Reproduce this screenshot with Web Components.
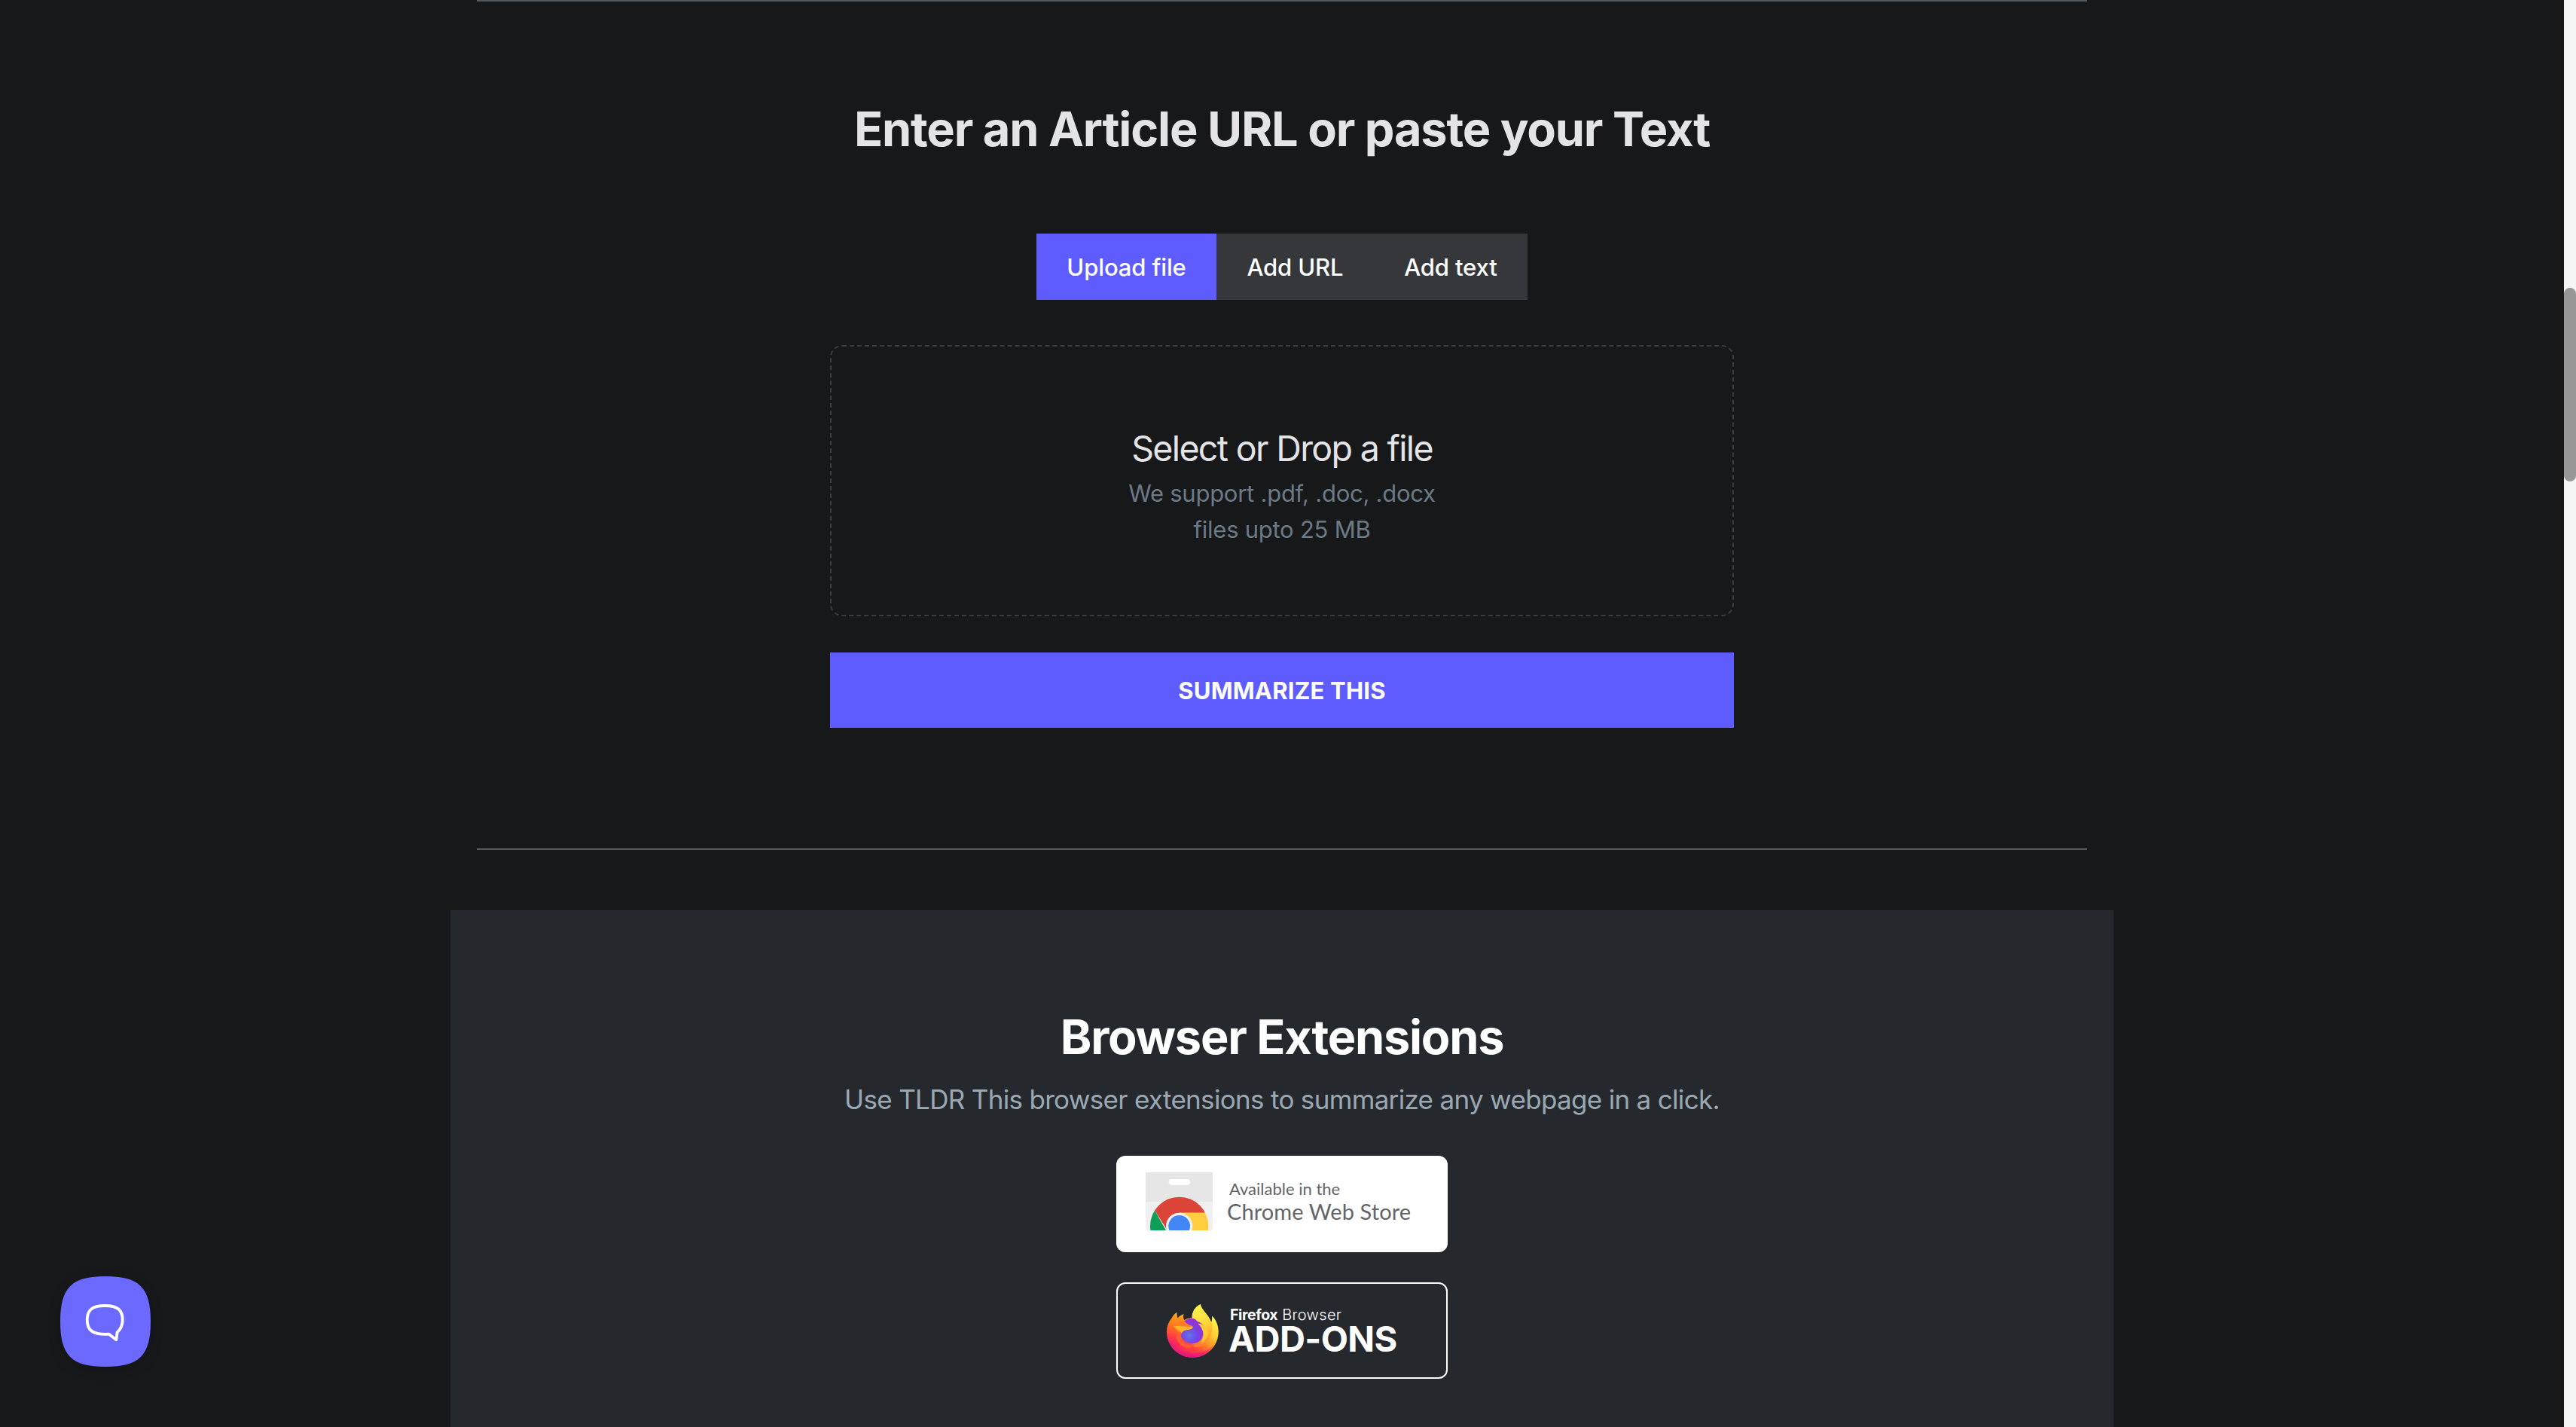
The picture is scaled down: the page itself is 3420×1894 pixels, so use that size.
<!DOCTYPE html>
<html lang="en">
<head>
<meta charset="utf-8">
<title>TLDR This</title>
<style>
	body {
		margin: 0;
		background: #17181a;
		font-family: Inter, "Liberation Sans", sans-serif;
		overflow: hidden;
	}
</style>
</head>
<body>
<tldr-page>
	<section-rule></section-rule>
	<summarize-form heading="Enter an Article URL or paste your Text">
		<tab-bar slot="tabs">
			<tab-item active>Upload file</tab-item>
			<tab-item>Add URL</tab-item>
			<tab-item>Add text</tab-item>
		</tab-bar>
		<drop-zone>
			Select or Drop a file
			<span slot="hint">We support .pdf, .doc, .docx<br>files upto 25 MB</span>
		</drop-zone>
		<submit-button>SUMMARIZE THIS</submit-button>
	</summarize-form>
	<section-rule></section-rule>
	<extensions-panel>
		<span slot="title">Browser Extensions</span>
		<span slot="subtitle">Use TLDR This browser extensions to summarize any webpage in a click.</span>
		<chrome-badge></chrome-badge>
		<firefox-badge></firefox-badge>
	</extensions-panel>
</tldr-page>
<chat-launcher></chat-launcher>

<script>
function define(name, html) {
	window.customElements.define(name, class extends HTMLElement {
		constructor() {
			super();
			this.attachShadow({ mode: 'open' });
			this.shadowRoot.innerHTML = html;
		}
	});
}

define('tldr-page', `
	<style>
		:host {
			display: flex;
			height: 1894px;
			overflow: hidden;
		}
		main {
			flex: 1;
			display: flex;
			flex-direction: column;
			align-items: center;
		}
		.track {
			box-sizing: border-box;
			width: 16px;
			padding-top: 382px;
			background: #f5f5f5;
		}
		.thumb {
			height: 257px;
			border-radius: 8px;
			background: #979797;
		}
	</style>
	<main><slot></slot></main>
	<div class="track"><div class="thumb"></div></div>
`);

define('section-rule', `
	<style>
		:host {
			display: block;
			flex: none;
			width: 2138px;
			height: 2px;
			background: #545b61;
		}
	</style>
`);

class SummarizeForm extends HTMLElement {
	constructor() {
		super();
		this.attachShadow({ mode: 'open' });
		this.shadowRoot.innerHTML = `
			<style>
				:host {
					display: flex;
					flex-direction: column;
					align-items: center;
					flex: none;
					box-sizing: border-box;
					height: 1124px;
					padding-top: 131px;
				}
				h2 {
					margin: 0 0 100px;
					font-size: 63px;
					line-height: 77px;
					font-weight: 700;
					letter-spacing: -1.2px;
					color: #e4e4e6;
					white-space: nowrap;
				}
				.fields {
					display: flex;
					flex-direction: column;
					gap: 48px;
					width: 1200px;
					margin-top: 60px;
				}
			</style>
			<h2></h2>
			<slot name="tabs"></slot>
			<div class="fields"><slot></slot></div>
		`;
	}

	connectedCallback() {
		this.shadowRoot.querySelector('h2').textContent = this.getAttribute('heading');
	}
}
window.customElements.define('summarize-form', SummarizeForm);

define('tab-bar', `
	<style>
		:host {
			display: flex;
			width: 652px;
			height: 88px;
			background: #36373b;
		}
	</style>
	<slot></slot>
`);

define('tab-item', `
	<style>
		:host {
			display: flex;
			flex: 1 1 auto;
			align-items: center;
			justify-content: center;
			padding-top: 1px;
			font-size: 31px;
			font-weight: 550;
			letter-spacing: -0.12px;
			color: #fff;
			white-space: nowrap;
		}
		:host([active]) {
			background: #5e5cff;
		}
	</style>
	<slot></slot>
`);

define('drop-zone', `
	<style>
		:host {
			display: block;
			box-sizing: border-box;
			height: 360px;
			padding-top: 105px;
			border: 2px dashed #3a3b3d;
			border-radius: 16px;
			text-align: center;
		}
		.title {
			font-size: 46.5px;
			line-height: 60px;
			font-weight: 430;
			letter-spacing: -1.65px;
			color: #e4e4e6;
		}
		.hint {
			margin-top: 6px;
			font-size: 31px;
			line-height: 48px;
			font-weight: 430;
			letter-spacing: -0.25px;
			color: #6c7a86;
		}
	</style>
	<div class="title"><slot></slot></div>
	<div class="hint"><slot name="hint"></slot></div>
`);

define('submit-button', `
	<style>
		:host {
			display: flex;
			align-items: center;
			justify-content: center;
			box-sizing: border-box;
			height: 100px;
			padding-top: 1px;
			background: #5e5cff;
			color: #fff;
			font-size: 31px;
			font-weight: 650;
			letter-spacing: 0.2px;
		}
	</style>
	<slot></slot>
`);

define('extensions-panel', `
	<style>
		:host {
			display: flex;
			flex-direction: column;
			align-items: center;
			flex: none;
			box-sizing: border-box;
			width: 2208px;
			height: 760px;
			margin-top: 80px;
			padding-top: 130px;
			background: #25282d;
		}
		h2 {
			margin: 0;
			font-size: 63px;
			line-height: 77px;
			font-weight: 700;
			letter-spacing: -1.24px;
			color: #fff;
		}
		p {
			margin: 17px 0 48px;
			font-size: 35px;
			line-height: 54px;
			font-weight: 430;
			letter-spacing: -0.68px;
			color: #9aa8b4;
		}
		.badges {
			display: flex;
			flex-direction: column;
			gap: 40px;
		}
	</style>
	<h2><slot name="title"></slot></h2>
	<p><slot name="subtitle"></slot></p>
	<div class="badges"><slot></slot></div>
`);

define('chrome-badge', `
	<style>
		:host {
			display: flex;
			box-sizing: border-box;
			width: 440px;
			height: 128px;
			padding: 21.7px 0 0 39px;
			border-radius: 12px;
			background: #fff;
			color: #636569;
			font-family: Lato, sans-serif;
			white-space: nowrap;
		}
		svg {
			width: 89px;
			height: 77.7px;
		}
		.text {
			padding: 9.8px 0 0 19px;
		}
		.small {
			margin-left: 3px;
			font-size: 22px;
			line-height: 26px;
		}
		.big {
			font-size: 29px;
			line-height: 34px;
			letter-spacing: 0.1px;
		}
	</style>
	<svg viewBox="153 107 267 233">
		<defs>
			<clipPath id="bag"><path d="M153 107h267v219q0 14-14 14H167q-14 0-14-14z"/></clipPath>
			<clipPath id="ball"><circle cx="287" cy="321" r="116"/></clipPath>
		</defs>
		<g clip-path="url(#bag)">
			<path fill="#e6e6e6" d="M153 107h267v117H153z"/>
			<path fill="#f0f0f0" d="M153 224h267v116H153z"/>
			<rect x="245" y="134" width="85" height="23" rx="11.5" fill="#fff"/>
			<g clip-path="url(#ball)">
				<path fill="#db4437" d="M153 190h267v78H287l-46 72-51-80z"/>
				<path fill="#0f9d58" d="M150 190l40 70 48 85h-90z"/>
				<path fill="#ffcd40" d="M287 268h133v80H287z"/>
			</g>
			<circle cx="287" cy="321" r="53" fill="#f1f1f1"/>
			<circle cx="287" cy="321" r="43" fill="#4285f4"/>
		</g>
	</svg>
	<div class="text">
		<div class="small">Available in the</div>
		<div class="big">Chrome Web Store</div>
	</div>
`);

define('firefox-badge', `
	<style>
		:host {
			display: flex;
			box-sizing: border-box;
			width: 440px;
			height: 128px;
			padding: 27.3px 0 0 65px;
			border: 2px solid #fff;
			border-radius: 12px;
			color: #fff;
			white-space: nowrap;
		}
		svg {
			width: 68.7px;
			height: 70.7px;
		}
		.text {
			padding: 0.7px 0 0 13.3px;
		}
		.small {
			margin-left: 2px;
			font-size: 20px;
			line-height: 26px;
			font-weight: 300;
			letter-spacing: 0.35px;
		}
		b {
			font-size: 19.5px;
			font-weight: 700;
			letter-spacing: -0.4px;
		}
		.big {
			font-size: 47px;
			line-height: 38px;
			font-weight: 700;
			letter-spacing: -0.57px;
		}
	</style>
	<svg viewBox="237 634 206 212">
		<defs>
			<linearGradient id="body" gradientUnits="userSpaceOnUse" x1="415" y1="670" x2="275" y2="825">
				<stop offset="0.05" stop-color="#fff44f"/>
				<stop offset="0.3" stop-color="#ffc930"/>
				<stop offset="0.48" stop-color="#ff9326"/>
				<stop offset="0.68" stop-color="#ff4a3a"/>
				<stop offset="0.86" stop-color="#ff2f50"/>
				<stop offset="1" stop-color="#e31587"/>
			</linearGradient>
			<linearGradient id="left" gradientUnits="userSpaceOnUse" x1="290" y1="670" x2="275" y2="790">
				<stop offset="0" stop-color="#ffa91e"/>
				<stop offset="0.4" stop-color="#ff7a1e"/>
				<stop offset="1" stop-color="#ff4040" stop-opacity="0"/>
			</linearGradient>
			<linearGradient id="low" gradientUnits="userSpaceOnUse" x1="0" y1="790" x2="0" y2="846">
				<stop offset="0" stop-color="#ff3050" stop-opacity="0"/>
				<stop offset="1" stop-color="#e0128a"/>
			</linearGradient>
			<linearGradient id="flame" x1="0.3" y1="0" x2="0.6" y2="1">
				<stop offset="0" stop-color="#fff44f"/>
				<stop offset="0.5" stop-color="#ffdc3e"/>
				<stop offset="1" stop-color="#ff9a2c"/>
			</linearGradient>
			<radialGradient id="globe" cx="0.38" cy="0.68" r="0.68">
				<stop offset="0" stop-color="#6173e8"/>
				<stop offset="0.5" stop-color="#7542e5"/>
				<stop offset="1" stop-color="#a02bd0"/>
			</radialGradient>
		</defs>
		<path fill="url(#body)" d="M237 745C237 723 245 704 257 690C261 681 268 673 277 667Q276 679 280 690Q289 680 304 674Q301 688 306 698C315 692 326 689 338 689C337 664 350 645 371 634C376 660 402 672 414 706Q419 696 417 681C432 691 443 719 443 743C443 802 396 846 340 846C283 846 237 802 237 745Z"/>
		<path fill="url(#left)" d="M237 745C237 723 245 704 257 690C261 681 268 673 277 667Q276 679 280 690Q289 680 304 674Q301 688 306 698L325 725L300 800H250Q237 773 237 745Z"/>
		<path fill="url(#low)" d="M251 795Q290 826 340 828Q400 826 431 790C414 826 379 846 340 846C302 846 269 826 251 795Z"/>
		<circle cx="339" cy="740" r="50" fill="url(#globe)"/>
		<path fill="url(#flame)" d="M338 689C337 664 350 645 371 634C376 660 403 671 415 708C425 742 408 774 384 790C398 770 402 745 388 724C381 712 370 706 360 703Q352 692 338 689Z"/>
		<path fill="#ffc934" d="M361 711C386 709 403 731 402 754C401 776 388 790 370 794C385 770 390 737 361 711Z"/>
		<path fill="#ff8a32" opacity="0.75" d="M402 754C401 781 386 801 356 806C345 807 339 796 342 790C373 792 383 762 381 741Q386 767 371 788Q394 780 402 754Z"/>
		<path fill="#ff7d22" d="M264 720Q278 709 306 698Q309 711 339 721Q342 725 338 730C330 737 315 733 303 742Q294 750 293 760Q273 740 264 720Z"/>
		<path fill="#ffb52a" d="M264 722C284 716 315 728 342 723Q340 734 320 736C305 738 301 741 294 749C292 739 276 735 264 722Z"/>
		<path fill="#ff5b34" d="M294 746Q289 778 313 791Q331 800 351 791Q342 808 318 808Q285 803 277 770Q275 743 294 746Z"/>
	</svg>
	<div class="text">
		<div class="small"><b>Firefox</b> Browser</div>
		<div class="big">ADD-ONS</div>
	</div>
`);

define('chat-launcher', `
	<style>
		:host {
			display: block;
			position: fixed;
			left: 80px;
			bottom: 80px;
			width: 120px;
			height: 120px;
			filter: drop-shadow(0 4px 8px rgba(0, 0, 0, 0.15));
		}
		svg {
			display: block;
		}
	</style>
	<svg width="120" height="120" viewBox="0 0 120 120">
		<path fill="#6b69ff" d="M60 0C105 0 120 15 120 60S105 120 60 120 0 105 0 60 15 0 60 0Z"/>
		<path fill="none" stroke="#fff" stroke-width="3.9" stroke-linejoin="round" d="M59.3 39C77 39 82.7 45.5 82.7 58C82.7 66.5 80 70.5 75.7 74.3L74.3 84.3L64.7 76.7C43 78 35.7 71.5 35.7 58C35.7 45 42 39 59.3 39Z"/>
	</svg>
`);
</script>
</body>
</html>
